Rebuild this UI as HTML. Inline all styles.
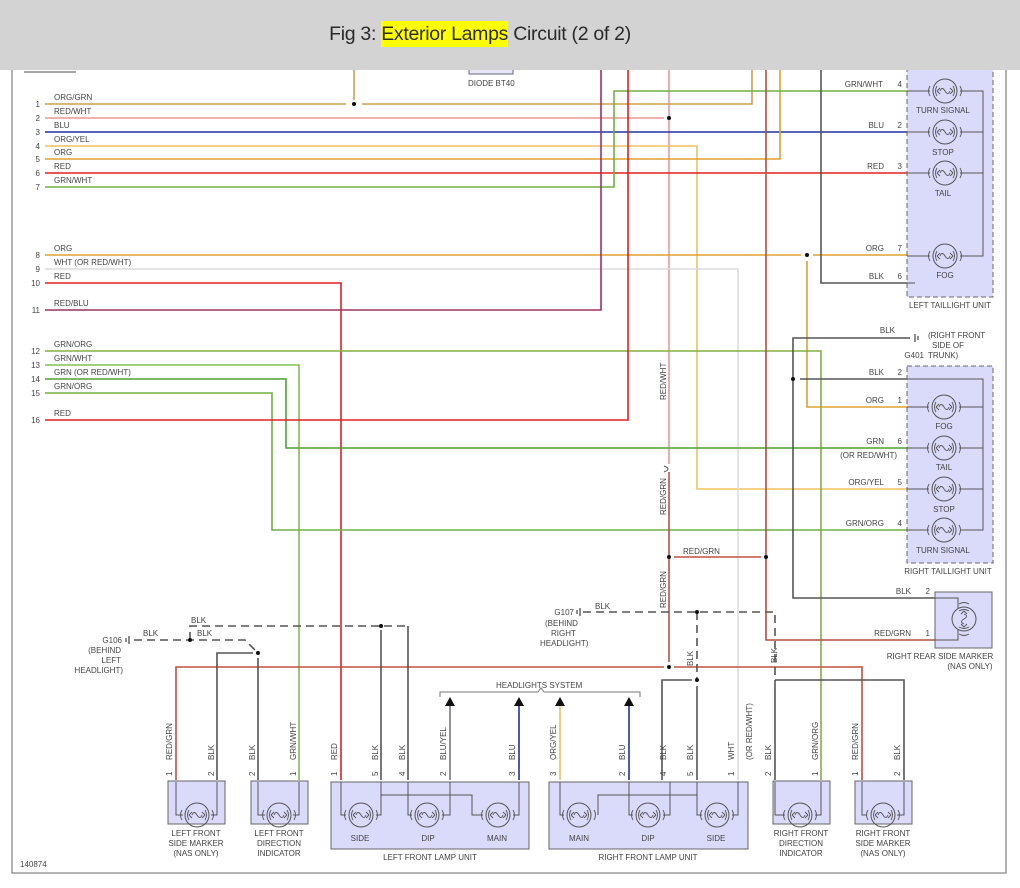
<!DOCTYPE html>
<html><head><meta charset="utf-8"><style>
html,body{margin:0;padding:0;background:#fff;}
body{width:1020px;height:888px;overflow:hidden;position:relative;font-family:"Liberation Sans",sans-serif;}
#hdr{position:absolute;left:0;top:0;width:1020px;height:70px;background:#d3d3d3;z-index:2;}
#hdr div{position:absolute;left:0;width:960px;top:23px;text-align:center;font-size:19.5px;color:#2a2a2a;font-family:"Liberation Sans",sans-serif;letter-spacing:-0.3px;}
#hdr span{background:#ffff00;padding:2px 0;}
svg{position:absolute;left:0;top:0;}
svg text{font-family:"Liberation Sans",sans-serif;font-size:8px;fill:#444;}
</style></head><body>
<div id="hdr"><div>Fig 3: <span>Exterior Lamps</span> Circuit (2 of 2)</div></div>
<svg width="1020" height="888" viewBox="0 0 1020 888">
<defs>
<g id="bulb"><circle cx="0" cy="0" r="12" fill="none" stroke="#555" stroke-width="1"/><path d="M-8,-5 Q-11,0 -8,5 M8,-5 Q11,0 8,5 M-8,0 L-5,-3 M-8,0 L-5,3 M8,0 L5,-3 M8,0 L5,3 M-5,0 Q-3,-5 0,0 Q3,5 5,0" fill="none" stroke="#555" stroke-width="0.9"/><path d="M-15,-5 Q-18,0 -15,5 M15,-5 Q18,0 15,5" fill="none" stroke="#555" stroke-width="0.9"/></g>
</defs>
<g fill="none" stroke-width="1.6">
<path d="M12,70 V873 H1006 V70" stroke="#888" stroke-width="1.3"/>
<path d="M24,72 H76" stroke="#888"/>
<rect x="469" y="62" width="44" height="12" fill="#e6e6f8" stroke="#667" stroke-width="1"/>
<path d="M45,104 H346 M362,104 H752 V70 M354,70 V100" stroke="#c9a050"/>
<path d="M45,118 H664 M669,70 V464" stroke="#e88080" stroke-width="1.3"/>
<path d="M45,132 H907" stroke="#2030a0"/>
<path d="M45,146 H697 V489 H907" stroke="#f0c060"/>
<path d="M45,159 H780 V70" stroke="#e0a030"/>
<path d="M45,173 H907" stroke="#e02020"/>
<path d="M45,187 H614 V91 H907" stroke="#70b040"/>
<path d="M45,255 H801 M813,255 H907 M807,261 V407 H907" stroke="#e0a030"/>
<path d="M45,269 H738 V780" stroke="#dcdcdc"/>
<path d="M45,283 H341 V780" stroke="#e02020"/>
<path d="M45,310 H601 V70" stroke="#a03060"/>
<path d="M45,351 H821 V780" stroke="#80b040"/>
<path d="M45,365 H299 V780" stroke="#80c050"/>
<path d="M45,379 H286 V448 H907" stroke="#50a030"/>
<path d="M45,393 H272 V530 H907" stroke="#70b040"/>
<path d="M45,420 H628 V70" stroke="#e02020"/>
<path d="M766,70 V640 H935" stroke="#b05040"/>
<path d="M669,472 V662 M674,557 H761 M176,780 V667 H664 M674,667 H862 V780" stroke="#c05040"/>
<path d="M664,466 Q672,469 664,472" stroke="#555" stroke-width="1"/>
<path d="M821,70 V283 H907" stroke="#555"/>
<path d="M910,338 H793 V598 H935 M800,379 H907" stroke="#555"/>
<path d="M217,780 V653 H253 M258,658 V780 M381,630 V780 M408,626 V780" stroke="#555"/>
<path d="M662,780 V680 H692 M697,686 V780 M775,680 V780 M775,680 H904 V780" stroke="#555"/>
<path d="M134,640 H245 L256,651 M190,640 V626 H408 M583,612 H775 V680 M697,612 V680" stroke="#555" stroke-dasharray="8,5"/>
<path d="M450,780 V705" stroke="#778"/>
<path d="M519,780 V705" stroke="#2030a0"/>
<path d="M560,780 V705" stroke="#f0c060"/>
<path d="M629,780 V705" stroke="#2030a0"/>
<path d="M440,697 V692 H538 L541,688 L544,692 H640 V697" stroke="#777" stroke-width="1"/>
</g>
<g fill="#111">
<circle cx="354" cy="104" r="2"/><circle cx="669" cy="118" r="2"/><circle cx="807" cy="255" r="2"/>
<circle cx="793" cy="379" r="2"/><circle cx="669" cy="557" r="2"/><circle cx="766" cy="557" r="2"/>
<circle cx="669" cy="667" r="2"/><circle cx="190" cy="640" r="2"/><circle cx="258" cy="653" r="2"/>
<circle cx="381" cy="626" r="2"/><circle cx="697" cy="612" r="2"/><circle cx="697" cy="680" r="2"/>
<path d="M445,706 L450,697 L455,706Z M514,706 L519,697 L524,706Z M555,706 L560,697 L565,706Z M624,706 L629,697 L634,706Z"/>
</g>
<g stroke="#444" stroke-width="1.2"><path d="M129,636 V644 M126,638 V642 M915,334 V342 M918,336 V340 M580,608 V616 M577,610 V614"/></g>
<g fill="#dadafa" stroke="#666" stroke-width="1">
<rect x="907" y="62" width="86" height="235" stroke-dasharray="5,3"/>
<rect x="907" y="366" width="86" height="197" stroke-dasharray="5,3"/>
<rect x="935" y="592" width="57" height="56"/>
<rect x="168" y="781" width="57" height="43"/>
<rect x="251" y="781" width="57" height="43"/>
<rect x="331" y="782" width="198" height="67"/>
<rect x="549" y="782" width="199" height="67"/>
<rect x="773" y="781" width="57" height="43"/>
<rect x="855" y="781" width="57" height="43"/>
</g>
<g fill="none" stroke="#555" stroke-width="1">
<path d="M907,91 H930 M960,91 H983 V256 H960 M907,132 H930 M960,132 H983 M907,173 H930 M960,173 H983 M907,256 H930 M907,283 H915"/>
<path d="M907,379 H983 V530 H960 M907,407 H929 M959,407 H983 M907,448 H929 M959,448 H983 M907,489 H929 M959,489 H983 M907,530 H929"/>
<path d="M935,598 H958 V608 M935,640 H958 V630"/>
<path d="M176,782 V815 H183 M217,782 V815 H211 M258,782 V815 H265 M299,782 V815 H293"/>
<path d="M341,782 V815 H346 M381,782 V815 H376 M381,795 H472 V815 H483 M408,782 V815 H412 M450,782 V815 H442 M519,782 V815 H513"/>
<path d="M560,782 V815 H564 M598,815 V795 H697 M629,782 V815 H633 M670,782 V815 H663 M697,782 V815 H702 M738,782 V815 H732"/>
<path d="M775,782 V815 H785 M821,782 V815 H815 M862,782 V815 H867 M904,782 V815 H897"/>
</g>
<g>
<use href="#bulb" x="945" y="91"/><use href="#bulb" x="945" y="132"/><use href="#bulb" x="945" y="173"/><use href="#bulb" x="945" y="256"/>
<use href="#bulb" x="944" y="407"/><use href="#bulb" x="944" y="448"/><use href="#bulb" x="944" y="489"/><use href="#bulb" x="944" y="530"/>
<use href="#bulb" x="964" y="619" transform="rotate(90 964 619)"/>
<use href="#bulb" x="197" y="815"/><use href="#bulb" x="279" y="815"/>
<use href="#bulb" x="361" y="815"/><use href="#bulb" x="427" y="815"/><use href="#bulb" x="498" y="815"/>
<use href="#bulb" x="579" y="815"/><use href="#bulb" x="648" y="815"/><use href="#bulb" x="717" y="815"/>
<use href="#bulb" x="800" y="815"/><use href="#bulb" x="883" y="815"/>
</g>
<g text-anchor="end">
<text x="40" y="107">1</text><text x="40" y="121">2</text><text x="40" y="135">3</text><text x="40" y="149">4</text><text x="40" y="162">5</text><text x="40" y="176">6</text><text x="40" y="190">7</text>
<text x="40" y="258">8</text><text x="40" y="272">9</text><text x="40" y="286">10</text><text x="40" y="313">11</text>
<text x="40" y="354">12</text><text x="40" y="368">13</text><text x="40" y="382">14</text><text x="40" y="396">15</text><text x="40" y="423">16</text>
<text x="883" y="87">GRN/WHT</text><text x="884" y="128">BLU</text><text x="884" y="169">RED</text><text x="884" y="251">ORG</text><text x="884" y="279">BLK</text>
<text x="902" y="87">4</text><text x="902" y="128">2</text><text x="902" y="169">3</text><text x="902" y="251">7</text><text x="902" y="279">6</text>
<text x="884" y="375">BLK</text><text x="884" y="403">ORG</text><text x="884" y="444">GRN</text><text x="897" y="458">(OR RED/WHT)</text><text x="884" y="485">ORG/YEL</text><text x="884" y="526">GRN/ORG</text>
<text x="902" y="375">2</text><text x="902" y="403">1</text><text x="902" y="444">6</text><text x="902" y="485">5</text><text x="902" y="526">4</text>
<text x="911" y="594">BLK</text><text x="911" y="636">RED/GRN</text><text x="930" y="594">2</text><text x="930" y="636">1</text>
<text x="895" y="333">BLK</text><text x="924" y="358">G401</text>
<text x="122" y="643">G106</text><text x="121" y="653">(BEHIND</text><text x="121" y="663">LEFT</text><text x="123" y="673">HEADLIGHT)</text>
<text x="574" y="615">G107</text>
</g>
<g>
<text x="54" y="100">ORG/GRN</text><text x="54" y="114">RED/WHT</text><text x="54" y="128">BLU</text><text x="54" y="142">ORG/YEL</text><text x="54" y="155">ORG</text><text x="54" y="169">RED</text><text x="54" y="183">GRN/WHT</text>
<text x="54" y="251">ORG</text><text x="54" y="265">WHT (OR RED/WHT)</text><text x="54" y="279">RED</text><text x="54" y="306">RED/BLU</text>
<text x="54" y="347">GRN/ORG</text><text x="54" y="361">GRN/WHT</text><text x="54" y="375">GRN (OR RED/WHT)</text><text x="54" y="389">GRN/ORG</text><text x="54" y="416">RED</text>
<text x="928" y="338">(RIGHT FRONT</text><text x="932" y="348">SIDE OF</text><text x="928" y="358">TRUNK)</text>
<text x="143" y="636">BLK</text><text x="191" y="623">BLK</text><text x="197" y="636">BLK</text>
<text x="595" y="609">BLK</text><text x="683" y="554">RED/GRN</text>
<text x="545" y="626">(BEHIND</text><text x="551" y="636">RIGHT</text><text x="540" y="646">HEADLIGHT)</text>
<text x="468" y="86">DIODE BT40</text>
<text x="496" y="688">HEADLIGHTS SYSTEM</text>
<text x="20" y="867">140874</text>
</g>
<g text-anchor="middle">
<text x="943" y="113">TURN SIGNAL</text><text x="943" y="155">STOP</text><text x="943" y="196">TAIL</text><text x="945" y="278">FOG</text>
<text x="950" y="308">LEFT TAILLIGHT UNIT</text>
<text x="944" y="429">FOG</text><text x="944" y="470">TAIL</text><text x="944" y="512">STOP</text><text x="943" y="553">TURN SIGNAL</text>
<text x="948" y="574">RIGHT TAILLIGHT UNIT</text>
<text x="940" y="659">RIGHT REAR SIDE MARKER</text><text x="970" y="669">(NAS ONLY)</text>
<text x="196" y="836">LEFT FRONT</text><text x="196" y="846">SIDE MARKER</text><text x="196" y="856">(NAS ONLY)</text>
<text x="279" y="836">LEFT FRONT</text><text x="279" y="846">DIRECTION</text><text x="279" y="856">INDICATOR</text>
<text x="360" y="841">SIDE</text><text x="428" y="841">DIP</text><text x="497" y="841">MAIN</text>
<text x="579" y="841">MAIN</text><text x="648" y="841">DIP</text><text x="716" y="841">SIDE</text>
<text x="430" y="860">LEFT FRONT LAMP UNIT</text><text x="648" y="860">RIGHT FRONT LAMP UNIT</text>
<text x="801" y="836">RIGHT FRONT</text><text x="801" y="846">DIRECTION</text><text x="801" y="856">INDICATOR</text>
<text x="883" y="836">RIGHT FRONT</text><text x="883" y="846">SIDE MARKER</text><text x="883" y="856">(NAS ONLY)</text>
</g>
<g>
<text transform="translate(172,760) rotate(-90)">RED/GRN</text><text transform="translate(172,776) rotate(-90)">1</text>
<text transform="translate(214,760) rotate(-90)">BLK</text><text transform="translate(214,776) rotate(-90)">2</text>
<text transform="translate(255,760) rotate(-90)">BLK</text><text transform="translate(255,776) rotate(-90)">2</text>
<text transform="translate(296,760) rotate(-90)">GRN/WHT</text><text transform="translate(296,776) rotate(-90)">1</text>
<text transform="translate(337,760) rotate(-90)">RED</text><text transform="translate(337,776) rotate(-90)">1</text>
<text transform="translate(378,760) rotate(-90)">BLK</text><text transform="translate(378,776) rotate(-90)">5</text>
<text transform="translate(405,760) rotate(-90)">BLK</text><text transform="translate(405,776) rotate(-90)">4</text>
<text transform="translate(446,760) rotate(-90)">BLU/YEL</text><text transform="translate(446,776) rotate(-90)">2</text>
<text transform="translate(515,760) rotate(-90)">BLU</text><text transform="translate(515,776) rotate(-90)">3</text>
<text transform="translate(556,760) rotate(-90)">ORG/YEL</text><text transform="translate(556,776) rotate(-90)">3</text>
<text transform="translate(625,760) rotate(-90)">BLU</text><text transform="translate(625,776) rotate(-90)">2</text>
<text transform="translate(666,760) rotate(-90)">BLK</text><text transform="translate(666,776) rotate(-90)">4</text>
<text transform="translate(693,760) rotate(-90)">BLK</text><text transform="translate(693,776) rotate(-90)">5</text>
<text transform="translate(734,760) rotate(-90)">WHT</text><text transform="translate(734,776) rotate(-90)">1</text>
<text transform="translate(752,760) rotate(-90)">(OR RED/WHT)</text>
<text transform="translate(771,760) rotate(-90)">BLK</text><text transform="translate(771,776) rotate(-90)">2</text>
<text transform="translate(818,760) rotate(-90)">GRN/ORG</text><text transform="translate(818,776) rotate(-90)">1</text>
<text transform="translate(858,760) rotate(-90)">RED/GRN</text><text transform="translate(858,776) rotate(-90)">1</text>
<text transform="translate(900,760) rotate(-90)">BLK</text><text transform="translate(900,776) rotate(-90)">2</text>
<text transform="translate(666,400) rotate(-90)">RED/WHT</text>
<text transform="translate(666,515) rotate(-90)">RED/GRN</text>
<text transform="translate(666,608) rotate(-90)">RED/GRN</text>
<text transform="translate(693,666) rotate(-90)">BLK</text>
<text transform="translate(777,663) rotate(-90)">BLK</text>
</g>
</svg>
</body></html>
